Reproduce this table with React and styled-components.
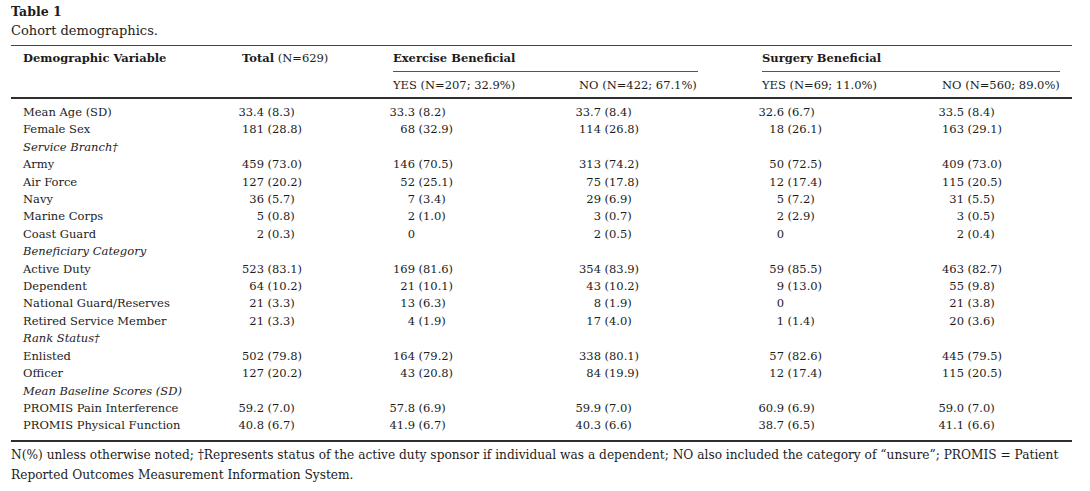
import React from 'react';
import styled, { createGlobalStyle } from 'styled-components';

const GlobalStyle = createGlobalStyle`
  body {
    margin: 0;
    background: #fff;
    color: #1c1c1c;
    font-family: "DejaVu Serif", "Liberation Serif", serif;
  }
`;

const Page = styled.div`
  width: 1061px;
  padding: 3px 0 0 11px;
`;

const Title = styled.div`
  font-size: 12.5px;
  font-weight: bold;
  line-height: 18px;
`;

const Caption = styled.div`
  font-size: 13px;
  line-height: 18px;
  margin-top: 1px;
`;

const Rule = styled.div`
  height: ${props => props.thick ? '2px' : '1px'};
  background: ${props => props.thick ? '#2e2e2e' : '#444'};
  margin-top: ${props => props.gap || 0}px;
`;

const COLS = '231px 151px 186px 183px 180px 130px';

const Grid = styled.div`
  display: grid;
  grid-template-columns: ${COLS};
  font-size: 11.5px;
  line-height: ${props => props.lh || '18px'};
  padding: ${props => props.pad || '0'};
`;

const Cell = styled.div`
  white-space: nowrap;
  padding-left: ${props => props.first ? '12px' : '0'};
  font-style: ${props => props.italic ? 'italic' : 'normal'};
  font-weight: ${props => props.bold ? 'bold' : 'normal'};
  grid-column: ${props => props.span ? `span ${props.span}` : 'auto'};
`;

const ValueCell = styled.div`
  display: flex;
  white-space: nowrap;
`;

const HeadCell = styled(Cell)`
  padding-top: 3px;
  padding-bottom: 4px;
`;

const SubCell = styled(Cell)`
  padding-top: 4px;
  padding-bottom: 3px;
`;

const GroupHead = styled.div`
  grid-column: span 2;
  display: flex;
  flex-direction: column;
  padding-right: ${props => props.inset}px;
`;

const GroupLabel = styled.div`
  font-weight: bold;
  padding-top: 3px;
  padding-bottom: 4px;
  border-bottom: 1px solid #555;
`;

const Bold = styled.span`
  font-weight: bold;
`;

const DataRow = styled.div`
  display: contents;
`;

const Num = styled.span`
  display: flex;
  justify-content: flex-end;
  flex: 0 0 22px;
  width: 22px;
`;

const Pct = styled.span`
  margin-left: 3.5px;
`;

const Footnote = styled.div`
  font-size: 12.2px;
  line-height: 20px;
  margin-top: 3px;
`;

const rows = [
  { label: 'Mean Age (SD)', v: [['33.4', '8.3'], ['33.3', '8.2'], ['33.7', '8.4'], ['32.6', '6.7'], ['33.5', '8.4']] },
  { label: 'Female Sex', v: [['181', '28.8'], ['68', '32.9'], ['114', '26.8'], ['18', '26.1'], ['163', '29.1']] },
  { label: 'Service Branch†', section: true },
  { label: 'Army', v: [['459', '73.0'], ['146', '70.5'], ['313', '74.2'], ['50', '72.5'], ['409', '73.0']] },
  { label: 'Air Force', v: [['127', '20.2'], ['52', '25.1'], ['75', '17.8'], ['12', '17.4'], ['115', '20.5']] },
  { label: 'Navy', v: [['36', '5.7'], ['7', '3.4'], ['29', '6.9'], ['5', '7.2'], ['31', '5.5']] },
  { label: 'Marine Corps', v: [['5', '0.8'], ['2', '1.0'], ['3', '0.7'], ['2', '2.9'], ['3', '0.5']] },
  { label: 'Coast Guard', v: [['2', '0.3'], ['0'], ['2', '0.5'], ['0'], ['2', '0.4']] },
  { label: 'Beneficiary Category', section: true },
  { label: 'Active Duty', v: [['523', '83.1'], ['169', '81.6'], ['354', '83.9'], ['59', '85.5'], ['463', '82.7']] },
  { label: 'Dependent', v: [['64', '10.2'], ['21', '10.1'], ['43', '10.2'], ['9', '13.0'], ['55', '9.8']] },
  { label: 'National Guard/Reserves', v: [['21', '3.3'], ['13', '6.3'], ['8', '1.9'], ['0'], ['21', '3.8']] },
  { label: 'Retired Service Member', v: [['21', '3.3'], ['4', '1.9'], ['17', '4.0'], ['1', '1.4'], ['20', '3.6']] },
  { label: 'Rank Status†', section: true },
  { label: 'Enlisted', v: [['502', '79.8'], ['164', '79.2'], ['338', '80.1'], ['57', '82.6'], ['445', '79.5']] },
  { label: 'Officer', v: [['127', '20.2'], ['43', '20.8'], ['84', '19.9'], ['12', '17.4'], ['115', '20.5']] },
  { label: 'Mean Baseline Scores (SD)', section: true },
  { label: 'PROMIS Pain Interference', v: [['59.2', '7.0'], ['57.8', '6.9'], ['59.9', '7.0'], ['60.9', '6.9'], ['59.0', '7.0']] },
  { label: 'PROMIS Physical Function', v: [['40.8', '6.7'], ['41.9', '6.7'], ['40.3', '6.6'], ['38.7', '6.5'], ['41.1', '6.6']] },
];

const Value = ({ num, pct }) => (
  <ValueCell>
    <Num>{num}</Num>
    {pct && <Pct>({pct})</Pct>}
  </ValueCell>
);

const App = () => (
  <>
    <GlobalStyle />
    <Page>
      <Title>Table 1</Title>
      <Caption>Cohort demographics.</Caption>
      <Rule gap={5} />

      <Grid>
        <HeadCell first bold>Demographic Variable</HeadCell>
        <HeadCell><Bold>Total</Bold> (N=629)</HeadCell>
        <GroupHead inset={64}><GroupLabel>Exercise Beneficial</GroupLabel></GroupHead>
        <GroupHead inset={12}><GroupLabel>Surgery Beneficial</GroupLabel></GroupHead>

        <SubCell first />
        <SubCell />
        <SubCell>YES (N=207; 32.9%)</SubCell>
        <SubCell>NO (N=422; 67.1%)</SubCell>
        <SubCell>YES (N=69; 11.0%)</SubCell>
        <SubCell>NO (N=560; 89.0%)</SubCell>
      </Grid>

      <Rule thick />

      <Grid pad="5px 0 5px 0" lh="17.4px">
        {rows.map(row => (
          <DataRow key={row.label}>
            {row.section ? (
              <Cell first italic span={6}>{row.label}</Cell>
            ) : (
              <>
                <Cell first>{row.label}</Cell>
                {row.v.map((val, i) => (
                  <Value key={i} num={val[0]} pct={val[1]} />
                ))}
              </>
            )}
          </DataRow>
        ))}
      </Grid>

      <Rule thick />

      <Footnote>
        N(%) unless otherwise noted; †Represents status of the active duty sponsor if individual was a dependent; NO also included the category of “unsure”; PROMIS = Patient Reported Outcomes Measurement Information System.
      </Footnote>
    </Page>
  </>
);

export default App;
